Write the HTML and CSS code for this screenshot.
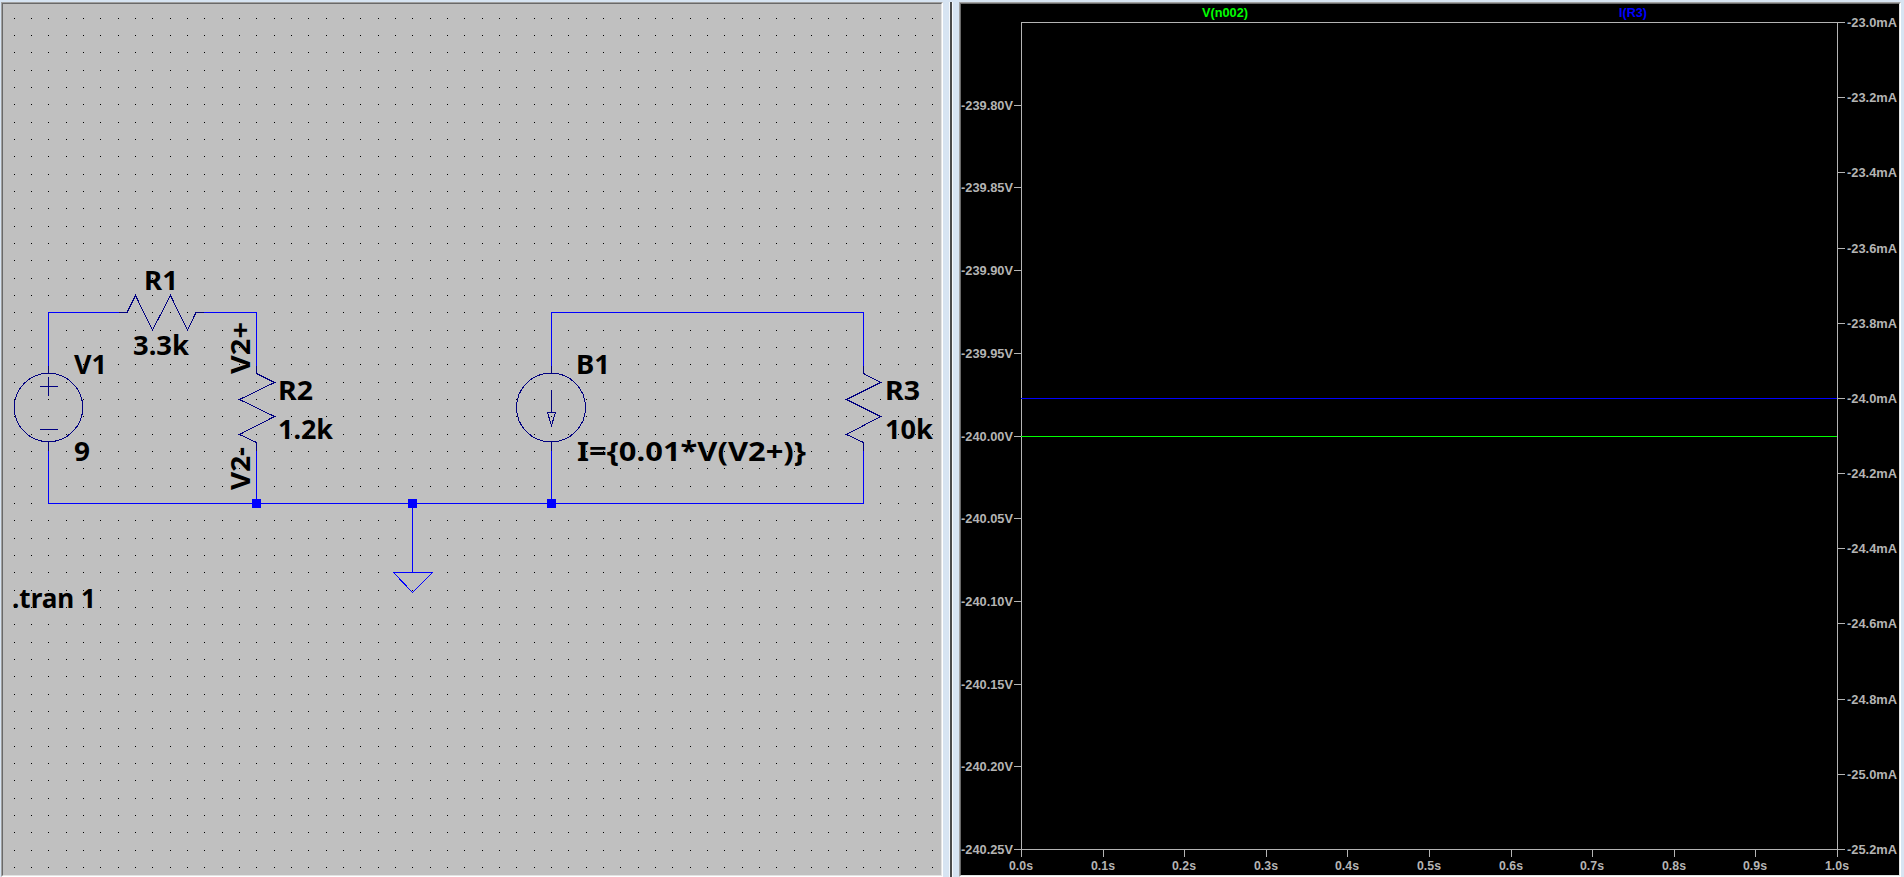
FILE: index.html
```
<!DOCTYPE html>
<html lang="en">
<head>
<meta charset="utf-8">
<title>Circuit simulation</title>
<link rel="stylesheet" href="styles.css">
</head>
<body>
<main class="workspace">
  <section class="pane schematic">
    <svg class="canvas" id="schematic" width="938" height="871" viewBox="3 4 938 871">
      <defs>
        <pattern id="grid" x="14" y="18" width="52" height="52" patternUnits="userSpaceOnUse">
          <path d="M0 0h1v1h-1zM17 0h1v1h-1zM34 0h1v1h-1zM0 17h1v1h-1zM17 17h1v1h-1zM34 17h1v1h-1zM0 34h1v1h-1zM17 34h1v1h-1zM34 34h1v1h-1z" fill="#000"/>
        </pattern>
      </defs>
      <rect x="3" y="4" width="938" height="871" fill="url(#grid)"/>
      <g class="wire">
        <path d="M119 312.5H48.5V366M204 312.5H256.5V366M256.5 451V503.5M48.5 451V503.5H863.5V451M863.5 366V312.5H551.5V366M551.5 451V503M412.5 503V572"/>
        <path d="M393.5 572.5H432.5L412.5 592.5Z"/>
      </g>
      <g class="part">
        <path d="M48.5 366V373M119 312.5H127L135.5 295.5L152.5 330L170.5 295.5L187.5 330L196 312.5H204"/>
        <circle cx="48.5" cy="407.5" r="34.2"/>
        <path d="M48.5 441V451M40 386.5H58M48.5 377V396M40 429.5H58"/>
        <path d="M256.5 366V373.5L274.5 382.5L239.5 399.5L274.5 416.5L239.5 434.5L256.5 442.5V451"/>
        <path d="M863.5 366V373.5L880.5 382.5L846.5 399.5L880.5 416.5L846.5 434.5L863.5 442.5V451"/>
        <circle cx="551" cy="407.5" r="34.5"/>
        <path d="M551.5 366V373M551.5 441V451M551.5 390V412.5M547.5 412.5H555.5L551.5 425.5Z"/>
      </g>
      <path class="junction" d="M252 499h9v9h-9zM408 499h9v9h-9zM547 499h9v9h-9z"/>
      <g class="label" id="labels"></g>
    </svg>
  </section>
  <div class="splitter"></div>
  <section class="pane plot">
    <svg class="canvas" id="plot" width="938" height="871" viewBox="961 4 938 871">
      <path class="axis" d="M1021.5 22V849.5M1837.5 22V849.5M1021 22.5H1845M1014 849.5H1845"/>
      <g class="axis" id="ticks"></g>
      <g class="tick" id="tickLabels"></g>
      <path class="trace trace-green" d="M1021 436.5H1837"/>
      <path class="trace trace-blue" d="M1021 398.5H1837"/>
    </svg>
  </section>
</main>
<script src="script.js"></script>
</body>
</html>
```

FILE: styles.css
```
html, body { height: 100%; }
body { margin: 0; overflow: hidden; background: #d7e4f2; }
.workspace {
  box-sizing: border-box;
  display: grid;
  grid-template-columns: 942px 16px 942px;
  height: 877px;
  padding: 2px 3px 0 1px;
}
.pane {
  box-sizing: border-box;
  height: 875px;
  border: 1px solid #a0a0a0;
  border-right-color: #fff;
  border-bottom-color: #fff;
  overflow: hidden;
}
.pane .canvas {
  display: block;
  box-sizing: content-box;
  border: 1px solid #696969;
  border-right-color: #e3e3e3;
  border-bottom-color: #e3e3e3;
}
.schematic { background: #c0c0c0; }
.plot { background: #000; }
.splitter {
  width: 2px;
  margin-left: 6px;
  border-left: 1px solid #f4f8fc;
  border-right: 1px solid #f4f8fc;
  background: #4a4a4a;
}
.wire, .part, .axis, .trace { fill: none; stroke-width: 1; shape-rendering: crispEdges; }
.wire { stroke: #00f; }
.part { stroke: #000080; }
.junction { fill: #00f; }
.label { font: bold 26px "Noto Sans", sans-serif; fill: #000; }
.axis { stroke: #b4b4b4; }
.tick { font: bold 13px "Liberation Sans", Arial, sans-serif; fill: #b4b4b4; }
.tick .green { fill: #0f0; }
.tick .blue { fill: #00f; }
.trace-green { stroke: #0f0; }
.trace-blue { stroke: #00f; }
```

FILE: script.js
```
const NS = 'http://www.w3.org/2000/svg';

function addText(parent, text, x, y, width, options = {}) {
  const el = document.createElementNS(NS, 'text');
  el.textContent = text;
  el.setAttribute('x', x);
  el.setAttribute('y', y);
  el.setAttribute('textLength', width);
  el.setAttribute('lengthAdjust', 'spacingAndGlyphs');
  if (options.vertical) el.setAttribute('transform', `rotate(-90 ${x} ${y})`);
  if (options.cls) el.setAttribute('class', options.cls);
  parent.appendChild(el);
}

const labels = document.getElementById('labels');
[
  ['R1', 144, 290, 34], ['3.3k', 133, 355, 56], ['V1', 74, 374, 33],
  ['9', 74, 461, 16], ['R2', 278, 400, 35], ['1.2k', 278, 439, 55],
  ['B1', 576, 374, 34], ['I={0.01*V(V2+)}', 577, 461, 229],
  ['R3', 885, 400, 35], ['10k', 885, 439, 48], ['.tran 1', 12, 608, 84]
].forEach(([t, x, y, w]) => addText(labels, t, x, y, w));
addText(labels, 'V2+', 250, 374, 52, { vertical: true });
addText(labels, 'V2-', 250, 490, 43, { vertical: true });

const ticks = document.getElementById('ticks');
const tickLabels = document.getElementById('tickLabels');
function addTick(d) {
  const p = document.createElementNS(NS, 'path');
  p.setAttribute('d', d);
  ticks.appendChild(p);
}
for (let i = 0; i < 10; i++) {
  const y = Math.round(849 - i * 82.7);
  addTick(`M1014 ${y + 0.5}H1021`);
  addText(tickLabels, `-${(240.25 - i * 0.05).toFixed(2)}V`, 961, y + 5, 52);
}
for (let i = 0; i < 12; i++) {
  const y = Math.round(22 + i * 827 / 11);
  addTick(`M1838 ${y + 0.5}H1845`);
  addText(tickLabels, `-${(23 + i * 0.2).toFixed(1)}mA`, 1847, y + 5, 50);
}
for (let i = 0; i <= 10; i++) {
  const x = Math.floor(1021.5 + i * 81.6);
  addTick(`M${x + 0.5} 850V857`);
  addText(tickLabels, `${(i / 10).toFixed(1)}s`, x - 12, 870, 24);
}
addText(tickLabels, 'V(n002)', 1202, 17, 46, { cls: 'green' });
addText(tickLabels, 'I(R3)', 1619, 17, 28, { cls: 'blue' });
```
